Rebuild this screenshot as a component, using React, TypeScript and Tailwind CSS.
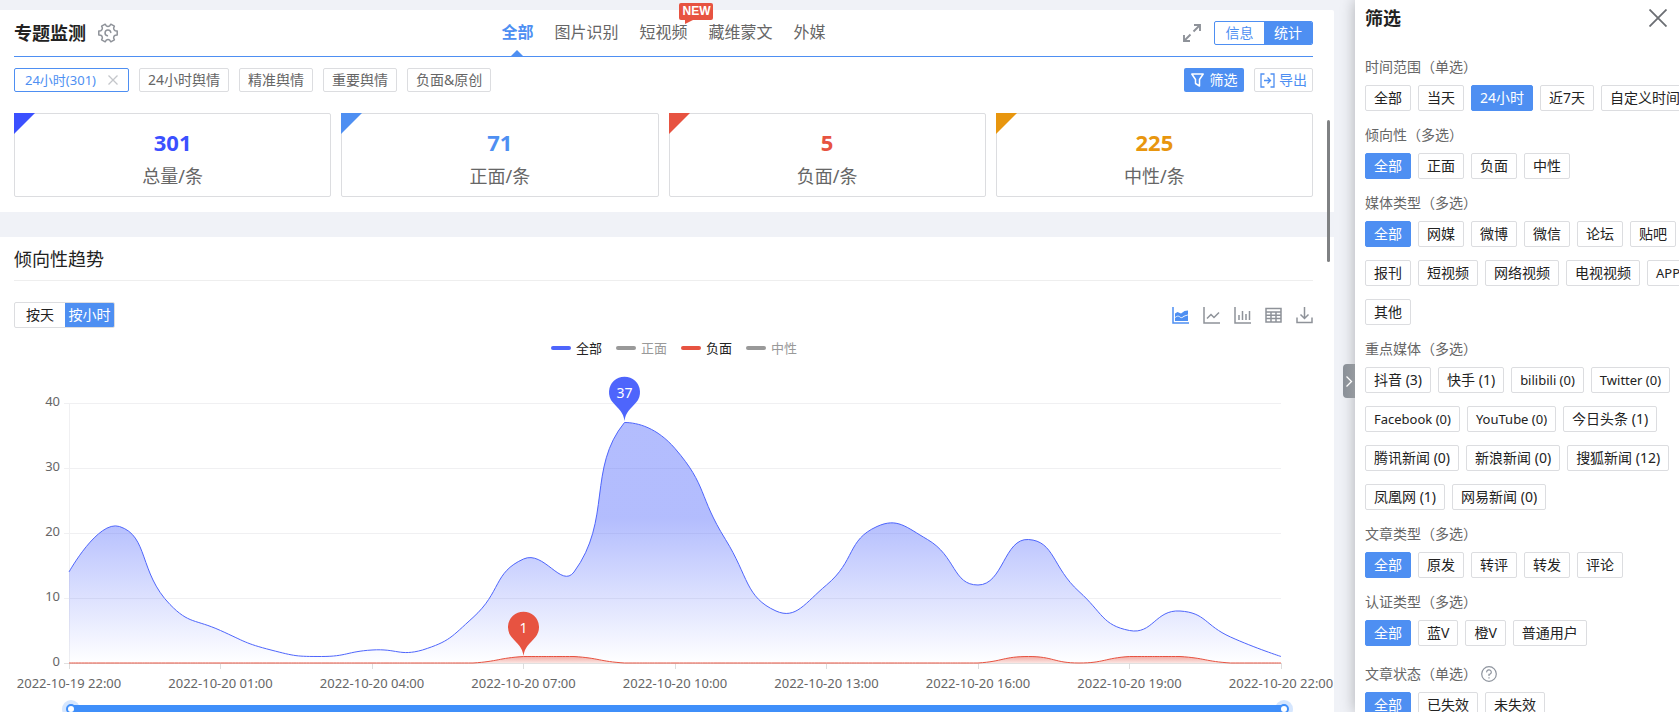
import { useState } from 'react';
import type { ReactNode } from 'react';

const BLUE = '#4e65fc';
const RED = '#e75341';

type Point = [number, number];

const tabs = ['全部', '图片识别', '短视频', '藏维蒙文', '外媒'];
const quickFilters = ['24小时舆情', '精准舆情', '重要舆情', '负面&原创'];

const stats = [
  { value: 301, label: '总量/条', text: 'text-[#3b50ff]', corner: 'border-t-[#3b50ff]' },
  { value: 71, label: '正面/条', text: 'text-[#4e8ff2]', corner: 'border-t-[#4e8ff2]' },
  { value: 5, label: '负面/条', text: 'text-[#e75341]', corner: 'border-t-[#e75341]' },
  { value: 225, label: '中性/条', text: 'text-[#e8960e]', corner: 'border-t-[#e8960e]' },
];

const legend = [
  { label: '全部', line: 'bg-[#4e65fc]', text: 'text-[#222]' },
  { label: '正面', line: 'bg-[#999]', text: 'text-[#999]' },
  { label: '负面', line: 'bg-[#e75341]', text: 'text-[#222]' },
  { label: '中性', line: 'bg-[#999]', text: 'text-[#999]' },
];

const filterGroups = [
  { title: '时间范围（单选）', options: ['全部', '当天', '24小时', '近7天', '自定义时间'], selected: '24小时' },
  { title: '倾向性（多选）', options: ['全部', '正面', '负面', '中性'], selected: '全部' },
  {
    title: '媒体类型（多选）',
    options: ['全部', '网媒', '微博', '微信', '论坛', '贴吧', '报刊', '短视频', '网络视频', '电视视频', 'APP', '其他'],
    selected: '全部',
  },
  {
    title: '重点媒体（多选）',
    options: [
      '抖音 (3)', '快手 (1)', 'bilibili (0)', 'Twitter (0)', 'Facebook (0)', 'YouTube (0)', '今日头条 (1)',
      '腾讯新闻 (0)', '新浪新闻 (0)', '搜狐新闻 (12)', '凤凰网 (1)', '网易新闻 (0)',
    ],
    selected: '',
  },
  { title: '文章类型（多选）', options: ['全部', '原发', '转评', '转发', '评论'], selected: '全部' },
  { title: '认证类型（多选）', options: ['全部', '蓝V', '橙V', '普通用户'], selected: '全部' },
  { title: '文章状态（单选）', options: ['全部', '已失效', '未失效'], selected: '全部', help: true },
];

// hourly counts, 10-19 22:00 to 10-20 22:00
const total = [14, 21, 9, 5, 2, 1, 2, 2, 7, 16, 14, 37, 33, 19, 8, 12, 21, 19, 12, 19, 11, 5, 8, 4, 1];
const negative = [0, 0, 0, 0, 0, 0, 0, 0, 0, 1, 1, 0, 0, 0, 0, 0, 0, 0, 0, 1, 0, 1, 1, 0, 0];
const xLabels = [
  '2022-10-19 22:00', '2022-10-20 01:00', '2022-10-20 04:00', '2022-10-20 07:00', '2022-10-20 10:00',
  '2022-10-20 13:00', '2022-10-20 16:00', '2022-10-20 19:00', '2022-10-20 22:00',
];

const LEFT = 55;
const RIGHT = 1267;
const BASE = 305;
const STEP = (RIGHT - LEFT) / 24;

const toY = (v: number) => BASE - v * 6.5;
const toPoints = (data: number[]): Point[] => data.map((v, i) => [LEFT + i * STEP, toY(v)]);

// smooth curve, control points clamped to the range of the data
const smoothPath = (pts: Point[]) => {
  const ys = pts.map((p) => p[1]);
  const min = Math.min(...ys);
  const max = Math.max(...ys);
  const clamp = (p: Point): Point => [
    Math.max(LEFT, Math.min(RIGHT, p[0])),
    Math.max(min, Math.min(max, p[1])),
  ];
  let d = `M${pts[0][0]} ${pts[0][1]}`;
  let cp0: Point = pts[0];
  for (let i = 1; i < pts.length; i++) {
    const p = pts[i];
    const prev = pts[i - 1];
    const next = pts[i + 1];
    let cp1: Point = p;
    let after: Point = p;
    if (next) {
      const v = [next[0] - prev[0], next[1] - prev[1]];
      const lenPrev = Math.hypot(p[0] - prev[0], p[1] - prev[1]);
      const lenNext = Math.hypot(p[0] - next[0], p[1] - next[1]);
      const ratio = lenNext / (lenNext + lenPrev);
      cp1 = [p[0] - v[0] * 0.5 * (1 - ratio), p[1] - v[1] * 0.5 * (1 - ratio)];
      after = [p[0] + v[0] * 0.5 * ratio, p[1] + v[1] * 0.5 * ratio];
    }
    const a = clamp(cp0);
    const b = clamp(cp1);
    d += ` C${a[0]} ${a[1]} ${b[0]} ${b[1]} ${p[0]} ${p[1]}`;
    cp0 = after;
  }
  return d;
};

const Pin = ({ x, y, color, value }: { x: number; y: number; color: string; value: number }) => (
  <g transform={`translate(${x} ${y})`}>
    <path d="M0 0 C-1 -9 -6 -12 -12 -19 A15.5 15.5 0 1 1 12 -19 C6 -12 1 -9 0 0 Z" fill={color} />
    <text x="0" y="-23" textAnchor="middle" fontSize="14" fill="#fff">
      {value}
    </text>
  </g>
);

const SliderHandle = ({ x }: { x: number }) => (
  <g>
    <circle cx={x} cy="351" r="9" fill="#3f8ffa" opacity="0.22" />
    <circle cx={x} cy="351" r="4" fill="#fff" stroke="#3f8ffa" strokeWidth="2" />
  </g>
);

const TrendChart = () => {
  const totalPath = smoothPath(toPoints(total));
  const negativePath = smoothPath(toPoints(negative));

  return (
    <svg
      viewBox="0 0 1320 363"
      className="block w-full shrink-0"
      role="img"
      aria-label="倾向性趋势"
    >
      <defs>
        <linearGradient id="total-fill" x1="0" y1="63" x2="0" y2="305" gradientUnits="userSpaceOnUse">
          <stop offset="0.4" stopColor={BLUE} stopOpacity="0.43" />
          <stop offset="1" stopColor={BLUE} stopOpacity="0" />
        </linearGradient>
        <linearGradient id="negative-fill" x1="0" y1="298" x2="0" y2="305" gradientUnits="userSpaceOnUse">
          <stop offset="0" stopColor={RED} stopOpacity="0.5" />
          <stop offset="1" stopColor={RED} stopOpacity="0.15" />
        </linearGradient>
      </defs>

      {[40, 30, 20, 10, 0].map((v) => (
        <g key={v}>
          <path d={`M${LEFT - 5} ${toY(v) + 0.5}H${RIGHT}`} stroke={v === 0 ? '#e0e0e0' : '#f0f0f2'} />
          <text x="46" y={toY(v) + 3} textAnchor="end" fontSize="13" fill="#666">
            {v}
          </text>
        </g>
      ))}
      <path d={`M${LEFT + 0.5} 45V${BASE}`} stroke="#f0f0f2" />
      {xLabels.map((label, i) => (
        <g key={label}>
          <path d={`M${Math.floor(LEFT + i * 3 * STEP) + 0.5} ${BASE}v6`} stroke="#ddd" />
          <text x={LEFT + i * 3 * STEP} y="330" textAnchor="middle" fontSize="13" fill="#666">
            {label}
          </text>
        </g>
      ))}

      <path d={`${totalPath} V${BASE} H${LEFT} Z`} fill="url(#total-fill)" />
      <path d={totalPath} fill="none" stroke={BLUE} />
      <path d={`${negativePath} V${BASE} H${LEFT} Z`} fill="url(#negative-fill)" />
      <path d={negativePath} fill="none" stroke={RED} />

      <Pin x={LEFT + 11 * STEP} y={63} color={BLUE} value={37} />
      <Pin x={LEFT + 9 * STEP} y={298} color={RED} value={1} />

      <rect x="57" y="347" width="1213" height="9" fill="#3f8ffa" />
      <SliderHandle x={57} />
      <SliderHandle x={1270} />
    </svg>
  );
};

const GearIcon = () => (
  <svg width="20" height="20" viewBox="0 0 20 20" fill="none" stroke="#8e9299" strokeWidth="1.5" strokeLinejoin="round" strokeLinecap="round">
    <path d="M7.2 1.2 L8.3 2.9 Q10 4 11.7 2.9 L12.8 1.2 L16.4 3.2 L15.6 5 Q15.6 7 17.2 7.7 L19.2 8 V12 L17.2 12.3 Q15.6 13 15.6 15 L16.4 16.8 L12.8 18.8 L11.7 17.1 Q10 16 8.3 17.1 L7.2 18.8 L3.6 16.8 L4.4 15 Q4.4 13 2.8 12.3 L.8 12 V8 L2.8 7.7 Q4.4 7 4.4 5 L3.6 3.2 Z" />
    <path d="M9.4 12.8 A2.9 2.9 0 1 1 12.8 9.4" />
  </svg>
);

const ExpandIcon = () => (
  <svg width="18" height="18" viewBox="0 0 18 18" fill="none" stroke="#8e9299" strokeWidth="1.9">
    <path d="M11 1 H17 V7 M17 1 L10.5 7.5 M7 17 H1 V11 M1 17 L7.5 10.5" />
  </svg>
);

const FunnelIcon = () => (
  <svg width="13" height="14" viewBox="0 0 13 14" fill="none" stroke="#fff" strokeWidth="1.5" strokeLinejoin="round">
    <path d="M.8 1 H12.2 L8.5 6.5 V13 L4.5 10.5 V6.5 Z" />
  </svg>
);

const ExportIcon = () => (
  <svg width="15" height="15" viewBox="0 0 15 15" fill="none" stroke="#4e8ff2" strokeWidth="1.3">
    <path d="M4.5 1 H1 V14 H4.5 M10.5 1 H14 V14 H10.5 M4 7.5 H10.5 M7.5 4.5 L10.5 7.5 L7.5 10.5" />
  </svg>
);

const chartTools: { label: string; icon: ReactNode }[] = [
  {
    label: '面积图',
    icon: (
      <g stroke="#4e8ff2">
        <path d="M1 0 V16 H17" />
        <path d="M3 6.5 L5.5 5 L9 6.5 L12.5 4 L16 3.5 V7.5 L12 8.8 L9.5 10.4 L6 8.4 L3 10 Z" fill="#4e8ff2" stroke="none" />
        <path d="M3 10.8 L6 9.2 L9.5 11.2 L12.5 9.5 L16 8.2 V14 H3 Z" fill="#4e8ff2" stroke="none" />
      </g>
    ),
  },
  { label: '折线图', icon: <path d="M1 0 V16 H17 M4 11.5 L8 7.5 L11 10.5 L16 5.5" /> },
  { label: '柱状图', icon: <path d="M1 0 V16 H17 M5 13 V8 M8.5 13 V4 M12 13 V7 M15.5 13 V4" /> },
  { label: '表格', icon: <path d="M1 1.5 H16 V15 H1 Z M1 5 H16 M1 8.2 H16 M1 11.6 H16 M6 5 V15 M11 5 V15" /> },
  { label: '下载', icon: <path d="M8.5 0 V11 M4.5 7.5 L8.5 11.5 L12.5 7.5 M1 10.5 V15.5 H16 V10.5" /> },
];

const isLatin = (text: string) => /^[\x20-\x7e]+$/.test(text);

const FilterPanel = () => (
  <aside className="relative w-[324px] shrink-0 bg-white pl-2.5 shadow-[0_0_14px_rgba(0,0,0,0.28)]">
    <button
      type="button"
      aria-label="收起"
      className="absolute top-[364px] -left-3 flex h-[34px] w-3 items-center justify-center rounded-l-sm bg-linear-to-r from-[#8a9098] to-[#969a9f]"
    >
      <svg width="8" height="12" viewBox="0 0 8 12" fill="none" stroke="#fff" strokeWidth="1.3">
        <path d="M1.5 1.5 L6.5 6.5 L1.5 11.5" />
      </svg>
    </button>
    <div className="h-full overflow-hidden">
      <div className="flex h-[57px] items-start justify-between pt-1.5 pr-3">
        <h2 className="text-lg leading-6 font-bold text-[#222]">筛选</h2>
        <button type="button" aria-label="关闭" className="mt-[3px]">
          <svg width="18" height="18" viewBox="0 0 18 18" stroke="#6b6e73" strokeWidth="1.8">
            <path d="M.5 .5 L17.5 17.5 M17.5 .5 L.5 17.5" />
          </svg>
        </button>
      </div>
      {/* rows are wider than the panel, the overflow is cut */}
      <div className="flex w-[350px] flex-col gap-3.5">
        {filterGroups.map((group) => (
          <section key={group.title} className={group.help ? 'pt-1' : ''}>
            <h3 className="flex h-5 items-center gap-1 text-sm leading-5 text-[#666]">
              {group.title}
              {group.help && (
                <svg width="16" height="16" viewBox="0 0 16 16" fill="none" stroke="#8e949e" strokeWidth="1.2">
                  <circle cx="8" cy="8" r="7.3" />
                  <path d="M5.7 6.4 A2.3 2.3 0 1 1 8 8.4 V10 M8 11.3 V12.6" />
                </svg>
              )}
            </h3>
            <div className="mt-2 flex flex-wrap gap-x-[7px] gap-y-[13px]">
              {group.options.map((option) => (
                <button
                  type="button"
                  key={option}
                  aria-pressed={option === group.selected}
                  className={`h-[26px] rounded-xs border px-2 leading-6 ${isLatin(option) ? 'text-[13px]' : 'text-sm'} ${
                    option === group.selected ? 'border-[#4e8ff2] bg-[#4e8ff2] text-white' : 'border-[#dcdde0] text-[#222]'
                  }`}
                >
                  {option}
                </button>
              ))}
            </div>
          </section>
        ))}
      </div>
    </div>
  </aside>
);

const App = () => {
  const [tab, setTab] = useState('全部');

  return (
    <div className="flex h-screen overflow-hidden bg-[#f0f2f7] font-['Noto_Sans','Noto_Sans_CJK_SC',sans-serif] text-[#666]">
      <main className="relative flex min-w-0 flex-1 flex-col gap-[25px] pt-2.5 pr-[21px]">
        <section className="shrink-0 rounded-tr-xs bg-white pr-[21px] pb-[15px] pl-3.5">
          <header className="grid h-[47px] grid-cols-[1fr_auto_1fr] items-center border-b border-[#4e8ff2]">
            <div className="flex items-center gap-3">
              <h1 className="text-lg leading-7 font-bold text-[#222]">专题监测</h1>
              <button type="button" aria-label="设置"><GearIcon /></button>
            </div>
            <nav className="flex h-full gap-[21px]">
              {tabs.map((name) => (
                <button
                  type="button"
                  key={name}
                  onClick={() => setTab(name)}
                  className={tab === name ? 'relative pb-0.5 text-base font-bold text-[#4e8ff2]' : 'relative pb-0.5 text-base'}
                >
                  {name}
                  {tab === name && (
                    <span className="absolute bottom-0 left-1/2 -translate-x-1/2 border-x-6 border-b-6 border-x-transparent border-b-[#4e8ff2]" />
                  )}
                  {name === '短视频' && (
                    <span className="absolute -top-[7px] left-10 rounded-xs bg-[#e75341] px-[3px] font-['Liberation_Sans',sans-serif] text-xs leading-[17px] font-bold text-white">
                      NEW
                      <span className="absolute top-full left-1.5 border-t-4 border-r-8 border-t-[#e75341] border-r-transparent" />
                    </span>
                  )}
                </button>
              ))}
            </nav>
            <div className="flex items-center justify-end gap-[13px]">
              <button type="button" aria-label="全屏"><ExpandIcon /></button>
              <div className="flex h-6 overflow-hidden rounded-xs border border-[#4e8ff2] text-sm leading-[22px]">
                <button type="button" className="w-[49px] text-[#4e8ff2]">信息</button>
                <button type="button" className="w-12 bg-[#4e8ff2] text-white">统计</button>
              </div>
            </div>
          </header>

          <div className="mt-[11px] flex h-6 gap-2.5 text-sm leading-[22px]">
            <button type="button" className="flex items-center gap-3 rounded-xs border border-[#4e8ff2] px-2.5 text-[13px] text-[#4e8ff2]">
              24小时(301)
              <svg width="10" height="10" viewBox="0 0 10 10" stroke="#c4c6ca" strokeWidth="1.3">
                <path d="M.5 .5 L9.5 9.5 M9.5 .5 L.5 9.5" />
              </svg>
            </button>
            {quickFilters.map((name) => (
              <button type="button" key={name} className="rounded-xs border border-[#dcdde0] px-2">
                {name}
              </button>
            ))}
            <button type="button" className="ml-auto flex w-[60px] items-center justify-center gap-1.5 rounded-xs bg-[#4e8ff2] text-white">
              <FunnelIcon />
              筛选
            </button>
            <button type="button" className="flex w-[59px] items-center justify-center gap-1 rounded-xs border border-[#dcdde0] text-[#4e8ff2]">
              <ExportIcon />
              导出
            </button>
          </div>

          <div className="mt-[21px] grid grid-cols-4 gap-2.5">
            {stats.map((s) => (
              <div key={s.label} className="relative rounded-xs border border-[#dcdde0] pt-3.5 pb-1.5 text-center">
                <span className={`absolute -top-px -left-px border-t-21 border-r-21 border-r-transparent ${s.corner}`} />
                <p className={`text-[22px] leading-7 font-bold ${s.text}`}>{s.value}</p>
                <p className="mt-1.5 text-lg leading-7">{s.label}</p>
              </div>
            ))}
          </div>
        </section>

        <section className="flex min-h-0 flex-1 flex-col overflow-hidden bg-white">
          <div className="pr-[21px] pl-3.5">
            <h2 className="border-b border-[#eee] pt-0.5 text-lg leading-[41px] text-[#222]">倾向性趋势</h2>
            <div className="mt-[21px] flex items-center justify-between">
              <div className="flex h-[26px] overflow-hidden rounded-xs border border-[#dcdde0] text-sm leading-6">
                <button type="button" className="w-[50px] text-[#222]">按天</button>
                <button type="button" className="w-[49px] bg-[#4e8ff2] text-white">按小时</button>
              </div>
              <div className="flex gap-3.5">
                {chartTools.map((tool) => (
                  <button type="button" key={tool.label} aria-label={tool.label}>
                    <svg width="17" height="17" viewBox="0 0 17 17" fill="none" stroke="#8e9299" strokeWidth="1.5">
                      {tool.icon}
                    </svg>
                  </button>
                ))}
              </div>
            </div>
          </div>
          <div className="pl-3.5">
            <div className="mt-2.5 flex h-5 justify-center gap-3.5 text-[13px] leading-5">
              {legend.map((item) => (
                <button type="button" key={item.label} className={`flex items-center gap-[5px] ${item.text}`}>
                  <span className={`h-1 w-5 rounded-xs ${item.line}`} />
                  {item.label}
                </button>
              ))}
            </div>
            <TrendChart />
          </div>
        </section>

        <div className="absolute top-[120px] right-[25px] h-[142px] w-[3px] rounded-full bg-[#7f8183]" />
      </main>
      <FilterPanel />
    </div>
  );
};

export default App;
